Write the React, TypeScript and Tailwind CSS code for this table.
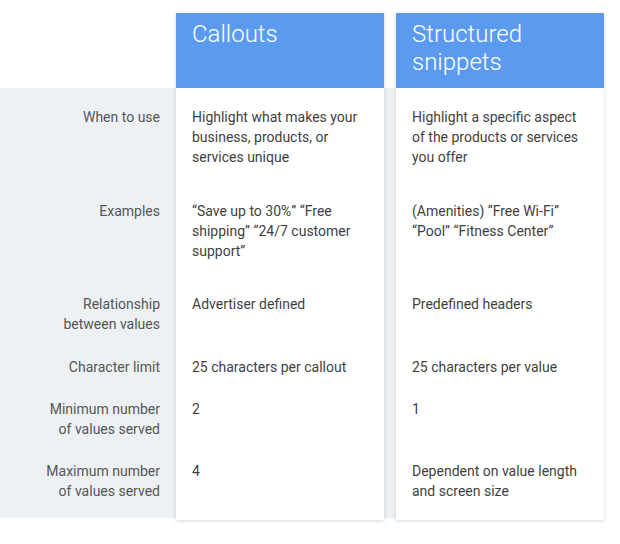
const rows = [
  { label: ["When to use"], a: "Highlight what makes your business, products, or services unique", b: "Highlight a specific aspect of the products or services you offer", h: "h-[94px]" },
  { label: ["Examples"], a: "“Save up to 30%” “Free shipping” “24/7 customer support”", b: "(Amenities) “Free Wi-Fi” “Pool” “Fitness Center”", h: "h-[93px]" },
  { label: ["Relationship", "between values"], a: "Advertiser defined", b: "Predefined headers", h: "h-[63px]" },
  { label: ["Character limit"], a: "25 characters per callout", b: "25 characters per value", h: "h-[42px]" },
  { label: ["Minimum number", "of values served"], a: "2", b: "1", h: "h-[62px]" },
  { label: ["Maximum number", "of values served"], a: "4", b: "Dependent on value length and screen size", h: "h-[40px]" },
];

function Card({ title, field }: { title: string[]; field: "a" | "b" }) {
  return (
    <div className="w-[208px] bg-white shadow-[0_1px_4px_rgba(0,0,0,0.16)]">
      <div className="h-[75px] bg-[#5a9bf0] px-4 pt-[7px] text-[24px] font-light leading-[28px] text-white">
        {title.map((t) => (
          <div key={t}>{t}</div>
        ))}
      </div>
      <div className="px-4 pt-[19px] pb-[19px]">
        {rows.map((r) => (
          <div key={r.label[0]} className={`${r.h} pr-2 text-[14px] leading-[20px] text-[#3f3f3f]`}>
            {r[field]}
          </div>
        ))}
      </div>
    </div>
  );
}

export default function App() {
  return (
    <div className="h-[544px] w-[620px] bg-white font-['Roboto','Liberation_Sans',sans-serif]">
      <div className="flex items-start pt-[13px]">
        {/* Labels */}
        <div className="mt-[75px] w-[176px] bg-[#eef1f4] pt-[19px] pr-4 pb-[17px]">
          {rows.map((r) => (
            <div key={r.label[0]} className={`${r.h} text-right text-[14px] leading-[20px] text-[#555]`}>
              {r.label.map((l) => (
                <div key={l}>{l}</div>
              ))}
            </div>
          ))}
        </div>
        {/* Callouts + gap */}
        <div className="bg-[linear-gradient(to_bottom,transparent_75px,#eef1f4_75px,#eef1f4_calc(100%-2px),transparent_calc(100%-2px))] pr-[12px]">
          <Card title={["Callouts"]} field="a" />
        </div>
        <Card title={["Structured", "snippets"]} field="b" />
      </div>
    </div>
  );
}
